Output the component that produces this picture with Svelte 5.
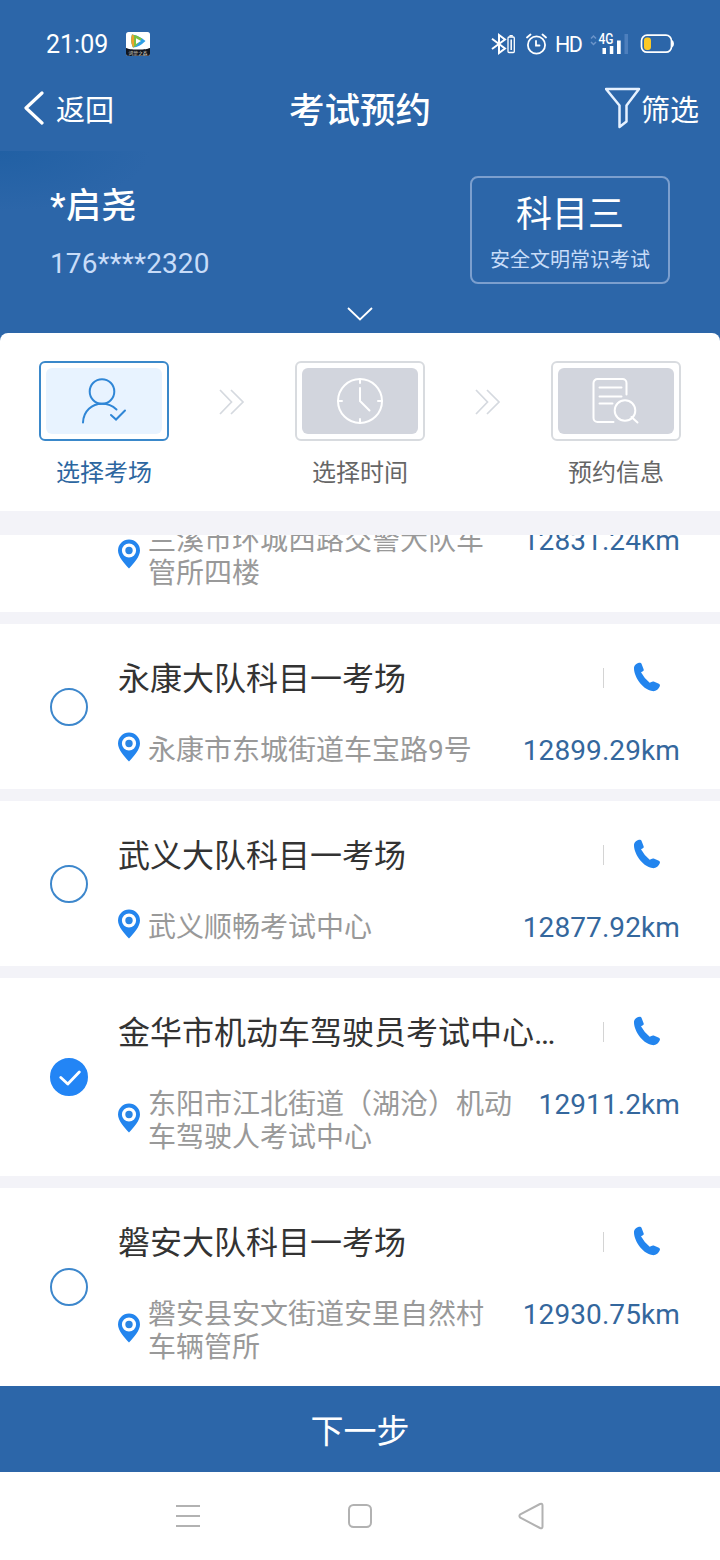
<script>
  let venues = [
    { id: 1, name: '', address: '兰溪市环城西路交警大队车管所四楼', distance: '12831.24km' },
    { id: 2, name: '永康大队科目一考场', address: '永康市东城街道车宝路9号', distance: '12899.29km' },
    { id: 3, name: '武义大队科目一考场', address: '武义顺畅考试中心', distance: '12877.92km' },
    { id: 4, name: '金华市机动车驾驶员考试中心…', address: '东阳市江北街道（湖沧）机动车驾驶人考试中心', distance: '12911.2km' },
    { id: 5, name: '磐安大队科目一考场', address: '磐安县安文街道安里自然村车辆管所', distance: '12930.75km' }
  ];

  let selected = 4;
</script>

<main class="screen">
  <div class="status-bar">
    <span class="time">21:09</span>
    <svg class="app-icon" width="24" height="24" viewBox="0 0 24 24">
      <rect width="24" height="24" rx="2.500" fill="#fff" />
      <path d="M0 16c3 1 5 1.500 12 1.500S21 17 24 16v5.500a2.500 2.500 0 0 1-2.500 2.500h-19A2.500 2.500 0 0 1 0 21.500z" fill="#10151f" />
      <path d="M6 2.500q7 1 13.500 6.500q-6 6-12.500 6.500q-3-6-1-13z" fill="#2f9fe6" />
      <path d="M6 2.500q5 .5 10 4L10 14l-3 1.500q-3-6-1-13z" fill="#7cc142" />
      <path d="M6 2.500l2 1v11l-1 1q-3-6-1-13z" fill="#f0a22b" />
      <path d="M10 6.200l5 2.800-5 3z" fill="#fff" />
      <text x="12" y="22.600" text-anchor="middle" font-size="4.800" fill="#d8d2c6">鸿蒙之森</text>
    </svg>

    <div class="status-icons">
      <svg width="24" height="22" viewBox="0 0 24 22" fill="none" stroke="#fff">
        <path d="M1 5.800L14 15.500 8 20V2l6 4.500L1 16" stroke-width="2" />
        <rect x="17" y="4" width="6.300" height="15.500" rx="1" stroke-width="1.300" />
        <path d="M18.500 2.700h3.300M20.200 6.500v10.500" stroke-width="1.500" />
      </svg>
      <svg class="alarm" width="22" height="22" viewBox="0 0 22 22" fill="none" stroke="#fff" stroke-width="1.800" stroke-linecap="round">
        <circle cx="10.500" cy="12" r="8.600" />
        <path d="M10 8v4.500h3.500M1 4.500L4.500 1.500M16.500 1.500l3.500 3" />
      </svg>
      <span class="hd">HD</span>
      <svg width="38" height="24" viewBox="0 0 38 24">
        <path d="M1 6.500L3.500 4 6 6.500M1 10l2.500 2.500L6 10" fill="none" stroke="#6b94c9" stroke-width="1.500" />
        <text x="8.500" y="12" font-size="14" font-weight="500" textLength="15" lengthAdjust="spacingAndGlyphs" fill="#fff">4G</text>
        <path d="M12.500 16H16v6h-3.500zM19.800 14h3.500v8h-3.500zM27 8.500h3.700V22H27z" fill="#fff" />
        <path d="M34.500 2H38v20h-3.500z" fill="#4d7fbd" />
      </svg>
      <svg class="battery" width="34" height="20" viewBox="0 0 34 20">
        <rect x="1.500" y="1.200" width="30" height="17" rx="5.500" fill="none" stroke="#fff" stroke-width="1.700" />
        <rect x="4" y="3.500" width="7" height="12.500" rx="3" fill="#fbc926" />
        <path d="M32 6q2 1 2 3.700T32 13.500z" fill="#fff" />
      </svg>
    </div>
  </div>

  <header class="nav">
    <button class="back">
      <svg width="20" height="34" viewBox="0 0 20 34" fill="none" stroke="#fff" stroke-width="3.200" stroke-linecap="round" stroke-linejoin="round">
        <path d="M18 2L2 17l16 15" />
      </svg>
      返回
    </button>
    <h1>考试预约</h1>
    <button class="filter">
      <svg width="36" height="42" viewBox="0 0 36 42" fill="none" stroke="#e6f1ff" stroke-width="2.500" stroke-linejoin="round">
        <path d="M1 2h33L21.500 18.500v16l-7 5.500V18.500z" />
      </svg>
      筛选
    </button>
  </header>

  <section class="profile">
    <div class="person">
      <div class="name">*启尧</div>
      <div class="phone-number">176****2320</div>
    </div>
    <div class="subject">
      <strong>科目三</strong>
      <span>安全文明常识考试</span>
    </div>
    <svg class="expand" width="26" height="14" viewBox="0 0 26 14" fill="none" stroke="#fff" stroke-width="1.800">
      <path d="M1 1l12 11.500L25 1" />
    </svg>
  </section>

  <section class="steps">
    <div class="step active">
      <div class="frame">
        <div class="tile">
          <svg width="48" height="50" viewBox="0 0 48 50" fill="none" stroke="#2f86d6" stroke-width="2" stroke-linecap="round">
            <circle cx="22" cy="15.500" r="12.300" />
            <path d="M3 46.500C3.500 35 12 27.800 22 27.800c5.500 0 10.500 2 14.500 5.700M31 39l5 4.500 9-9" />
          </svg>
        </div>
      </div>
      <span>选择考场</span>
    </div>

    <svg class="arrows" width="26" height="26" viewBox="0 0 26 26" fill="none" stroke="#d5d9df" stroke-width="1.700">
      <path d="M1 1l11.500 12L1 25M12 1l12 12-12 12" />
    </svg>

    <div class="step">
      <div class="frame">
        <div class="tile">
          <svg width="48" height="50" viewBox="0 0 48 50" fill="none" stroke="#fff" stroke-width="2" stroke-linecap="round">
            <circle cx="24" cy="25" r="22" />
            <path d="M24 3v4M24 47v-4M2 25h4M46 25h-4M24 12v13l9.500 9.500" />
          </svg>
        </div>
      </div>
      <span>选择时间</span>
    </div>

    <svg class="arrows" width="26" height="26" viewBox="0 0 26 26" fill="none" stroke="#d5d9df" stroke-width="1.700">
      <path d="M1 1l11.500 12L1 25M12 1l12 12-12 12" />
    </svg>

    <div class="step">
      <div class="frame">
        <div class="tile">
          <svg width="48" height="50" viewBox="0 0 48 50" fill="none" stroke="#fff" stroke-width="2" stroke-linecap="round">
            <path d="M34.500 18.500V7a4 4 0 0 0-4-4H5.500a4 4 0 0 0-4 4v35a4 4 0 0 0 4 4h16M7.500 11.500h22M7.500 20.500h22M7.500 27.500h13M39.500 41l6 5.500" />
            <circle cx="33" cy="34.500" r="10.300" />
          </svg>
        </div>
      </div>
      <span>预约信息</span>
    </div>
  </section>

  <section class="venues">
    {#each venues as venue (venue.id)}
      <!-- svelte-ignore a11y_click_events_have_key_events -->
      <!-- svelte-ignore a11y_no_static_element_interactions -->
      <div class="venue" on:click={() => (selected = venue.id)}>
        <div class="radio" class:checked={selected === venue.id}>
          {#if selected === venue.id}
            <svg width="22" height="16" viewBox="0 0 22 16" fill="none" stroke="#fff" stroke-width="2.800" stroke-linecap="round" stroke-linejoin="round">
              <path d="M1.800 7.500l7 6.500L20.300 2" />
            </svg>
          {/if}
        </div>
        <div class="info">
          <div class="title-row">
            <h2>{venue.name}</h2>
            <div class="divider"></div>
            <svg class="call" width="28" height="30" viewBox="0 0 28 30">
              <path d="M1 5.500C1.500 2.500 4.500.8 7 .8q1.200 0 1.600 1.200l2.100 5.500q.4 1.200-.8 1.700L8 10.200q3.500 6.500 8.700 10.600l1.700-.9q1.200-.6 2.300-.3l5.200 2.200q1.500.8 1 2.300c-1.200 3.300-4.300 5.600-7.800 5C8.500 27 .5 13.500 1 5.500z" fill="#2385ee" />
            </svg>
          </div>
          <div class="address-row">
            <svg class="pin" width="22" height="30" viewBox="0 0 22 30">
              <path d="M11 .5a11 11 0 0 1 11 11c0 6-6 12.500-11 18C6 24 0 17.500 0 11.500a11 11 0 0 1 11-11z" fill="#2385ee" />
              <circle cx="11" cy="11.500" r="5.400" fill="#2b86e4" stroke="#fff" stroke-width="3.400" />
            </svg>
            <p>{venue.address}</p>
            <span class="distance">{venue.distance}</span>
          </div>
        </div>
      </div>
    {/each}
  </section>

  <button class="next">下一步</button>

  <div class="system-nav">
    <svg width="26" height="28" viewBox="0 0 26 28" fill="none" stroke="#b2b2b2" stroke-width="2">
      <path d="M1 4h24M1 14h24M1 24h24" />
    </svg>
    <svg width="26" height="28" viewBox="0 0 26 28" fill="none" stroke="#b2b2b2" stroke-width="2">
      <rect x="2" y="3" width="22" height="22" rx="4.500" />
    </svg>
    <svg width="26" height="28" viewBox="0 0 26 28" fill="none" stroke="#b2b2b2" stroke-width="2" stroke-linejoin="round">
      <path d="M2.300 12.300L22 2q2.500-1 2.500 1.500v21q0 2.500-2.500 1.500L2.300 15.700q-1.800-1.700 0-3.400z" />
    </svg>
  </div>
</main>

<style>
  * {
    box-sizing: border-box;
  }

  :global(body) {
    margin: 0;
    background: #fff;
    font-family: Roboto, "Noto Sans CJK SC", sans-serif;
  }

  .screen {
    display: flex;
    flex-direction: column;
    width: 720px;
    height: 1560px;
    overflow: hidden;
    background: #2c66a9;
  }

  svg {
    display: block;
    flex-shrink: 0;
  }

  button {
    border: none;
    padding: 0;
    background: none;
    color: #fff;
    font-family: inherit;
  }

  .status-bar {
    display: flex;
    align-items: center;
    height: 66px;
    padding: 22px 46px 0;
    color: #fff;
  }

  .time {
    width: 80px;
    font-size: 25px;
  }

  .status-icons {
    display: flex;
    align-items: center;
    margin-left: auto;
  }

  .alarm {
    margin-left: 11px;
  }

  .hd {
    width: 35px;
    margin-left: 7px;
    font-size: 21.500px;
    letter-spacing: -1.600px;
  }

  .battery {
    margin-left: 12px;
  }

  .nav {
    display: grid;
    grid-template-columns: 1fr auto 1fr;
    align-items: center;
    height: 85px;
    padding: 0 21px 2px;
    color: #fff;
  }

  .back,
  .filter {
    display: flex;
    align-items: center;
    font-size: 29px;
  }

  .back {
    gap: 12px;
    padding-left: 3px;
  }

  .filter {
    justify-self: end;
  }

  h1 {
    margin: 0;
    font-size: 35.500px;
    font-weight: 500;
  }

  .profile {
    position: relative;
    display: flex;
    justify-content: space-between;
    height: 182px;
    padding: 25px 50px 0;
    background: radial-gradient(ellipse 150px 60px at 0 0, #2160a4, #2c66a9);
    color: #fff;
  }

  .name {
    margin-top: 7px;
    line-height: 48px;
    font-size: 35px;
    font-weight: 500;
    letter-spacing: 0.4px;
  }

  .phone-number {
    margin-top: 14px;
    line-height: 38px;
    font-size: 28px;
    letter-spacing: 0.100px;
    color: #c8dcf8;
  }

  .subject {
    display: flex;
    flex-direction: column;
    align-items: center;
    width: 200px;
    height: 108px;
    padding-top: 12px;
    border: 2px solid #7c9fce;
    border-radius: 8px;
  }

  .subject strong {
    line-height: 50px;
    font-size: 36px;
    font-weight: 400;
  }

  .subject span {
    margin-top: 5px;
    line-height: 30px;
    font-size: 20px;
    color: #c8dcf8;
  }

  .expand {
    position: absolute;
    left: 347px;
    bottom: 12px;
  }

  .steps {
    display: flex;
    justify-content: space-between;
    height: 178px;
    padding: 28px 39px 0;
    border-radius: 8px 8px 0 0;
    background: #fff;
  }

  .step {
    display: flex;
    flex-direction: column;
    align-items: center;
    font-size: 24px;
    line-height: 36px;
    color: #666;
  }

  .frame {
    width: 130px;
    height: 80px;
    margin-bottom: 14px;
    padding: 5px;
    border: 2px solid #d8dbdf;
    border-radius: 6px;
  }

  .tile {
    display: flex;
    align-items: center;
    justify-content: center;
    height: 100%;
    border-radius: 6px;
    background: #d2d5dd;
  }

  .active {
    color: #2c66a0;
  }

  .active .frame {
    border-color: #3a88ca;
  }

  .active .tile {
    background: #e8f3ff;
  }

  .arrows {
    margin-top: 28px;
  }

  .venues {
    display: flex;
    flex-direction: column;
    justify-content: flex-end;
    gap: 12px;
    height: 875px;
    border-top: 24px solid #f3f3f8;
    background: #f3f3f8;
    overflow: hidden;
  }

  .venue {
    display: flex;
    flex-shrink: 0;
    align-items: center;
    padding: 33px 40px 22px 50px;
    background: #fff;
  }

  .radio {
    display: flex;
    align-items: center;
    justify-content: center;
    width: 38px;
    height: 38px;
    margin: -11px 30px 0 0;
    border: 2px solid #3d87cc;
    border-radius: 50%;
  }

  .radio.checked {
    border-color: #2385f5;
    background: #2385f5;
  }

  .checked svg {
    margin: 2px 0 0 2px;
  }

  .info {
    flex: 1;
    min-width: 0;
  }

  .title-row {
    display: flex;
    align-items: center;
    height: 44px;
    margin-bottom: 33px;
  }

  h2 {
    width: 442px;
    margin: 0;
    white-space: nowrap;
    font-size: 32px;
    font-weight: 400;
    line-height: 44px;
    color: #333;
  }

  .divider {
    width: 1px;
    height: 20px;
    margin: -3px 29px 0 43px;
    background: #d4d4d4;
  }

  .call {
    margin-top: -5px;
  }

  .address-row {
    display: flex;
    align-items: center;
    line-height: 33px;
    font-size: 28px;
  }

  .pin {
    margin: -7px 8px 0 0;
  }

  .address-row p {
    flex: 1;
    margin: 0 19px 0 0;
    color: #999;
  }

  .distance {
    align-self: flex-start;
    letter-spacing: 0.100px;
    color: #34679d;
  }

  .next {
    height: 86px;
    background: #2c66a9;
    font-size: 33px;
  }

  .system-nav {
    display: flex;
    justify-content: space-between;
    align-items: center;
    height: 88px;
    padding: 0 176px 0 175px;
    background: #fff;
  }
</style>
